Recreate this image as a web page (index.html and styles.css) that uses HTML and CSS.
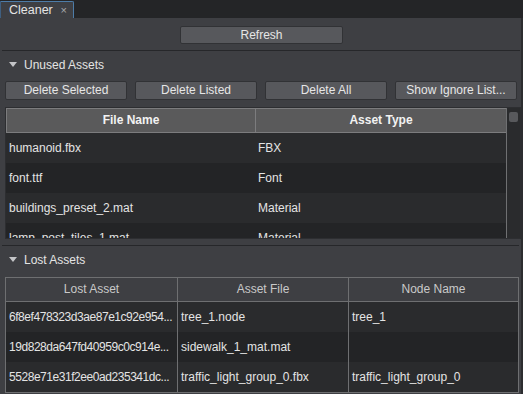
FILE: index.html
```html
<!DOCTYPE html>
<html lang="en">
<head>
    <meta charset="UTF-8">
    <title>Cleaner</title>
    <link rel="stylesheet" href="styles.css">
</head>
<body>

<div class="tabbar">
    <div class="tab">Cleaner<span class="tab-close">×</span></div>
</div>

<div class="panel">
    <div class="refresh-row">
        <button class="btn refresh">Refresh</button>
    </div>

    <!-- Unused assets -->
    <div class="section-head"><span class="arrow"></span>Unused Assets</div>
    <div class="actions">
        <button class="btn">Delete Selected</button>
        <button class="btn">Delete Listed</button>
        <button class="btn">Delete All</button>
        <button class="btn">Show Ignore List...</button>
    </div>
    <div class="unused-wrap">
        <div class="unused-table">
            <div class="u-head">File Name</div>
            <div class="u-head">Asset Type</div>
            <div class="u-cell">humanoid.fbx</div><div class="u-cell">FBX</div>
            <div class="u-cell alt">font.ttf</div><div class="u-cell alt">Font</div>
            <div class="u-cell">buildings_preset_2.mat</div><div class="u-cell">Material</div>
            <div class="u-cell alt">lamp_post_tiles_1.mat</div><div class="u-cell alt">Material</div>
        </div>
        <div class="scrollbar"><div class="thumb"></div></div>
    </div>

    <div class="divider"></div>

    <!-- Lost assets -->
    <div class="section-head"><span class="arrow"></span>Lost Assets</div>
    <div class="lost-table">
        <div class="l-head">Lost Asset</div>
        <div class="l-head">Asset File</div>
        <div class="l-head">Node Name</div>
        <div class="l-cell hash">6f8ef478323d3ae87e1c92e954...</div><div class="l-cell">tree_1.node</div><div class="l-cell">tree_1</div>
        <div class="l-cell alt hash">19d828da647fd40959c0c914e...</div><div class="l-cell alt">sidewalk_1_mat.mat</div><div class="l-cell alt"></div>
        <div class="l-cell hash">5528e71e31f2ee0ad235341dc...</div><div class="l-cell">traffic_light_group_0.fbx</div><div class="l-cell">traffic_light_group_0</div>
    </div>
</div>

</body>
</html>
```

FILE: styles.css
```css
body {
    margin: 0;
    width: 523px;
    height: 394px;
    overflow: hidden;
    background-color: #242527;
    font-family: 'Liberation Sans', Arial, sans-serif;
    font-size: 12px;
    color: #e4e4e4;
}
.tabbar {
    height: 18px;
    display: flex;
    align-items: flex-end;
}
.tab {
    width: 74px;
    height: 17px;
    box-sizing: border-box;
    padding-left: 8px;
    line-height: 16px;
    font-size: 12.5px;
    background-color: #3e3f43;
    border-top: 1px solid #4d7ca8;
    border-right: 1px solid #4d7ca8;
    border-left: 1px solid #3f5f80;
    border-radius: 0 2px 0 0;
    position: relative;
}
.tab-close {
    position: absolute;
    right: 6px;
    top: 0;
    font-size: 11px;
    color: #a8a9ad;
}
.panel {
    height: 376px;
    background-color: #3e3f43;
    border-right: 2px solid #2c2d30;
    box-sizing: border-box;
    display: flex;
    flex-direction: column;
}
.btn {
    font-family: inherit;
    font-size: 12px;
    color: #e6e6e6;
    background-color: #57585c;
    border: 1px solid #313235;
    border-radius: 2px;
    padding: 0;
    height: 19px;
    line-height: 17px;
}
.refresh-row {
    height: 33px;
    margin: 0 1px 0 2px;
    border-bottom: 1px solid #26272a;
    display: flex;
    justify-content: center;
    align-items: flex-start;
    padding-top: 8px;
    box-sizing: border-box;
}
.refresh {
    width: 163px;
    height: 18px;
    margin-left: 1px;
}
.section-head {
    height: 27px;
    line-height: 27px;
    display: flex;
    align-items: center;
    padding-left: 9px;
    padding-top: 1px;
    box-sizing: border-box;
}
.arrow {
    width: 0;
    height: 0;
    border-left: 4px solid transparent;
    border-right: 4px solid transparent;
    border-top: 5px solid #c4c5c8;
    margin-right: 7px;
    margin-top: -1px;
}
.actions {
    display: grid;
    grid-template-columns: repeat(4, 1fr);
    gap: 8px;
    margin: 3px 4px 0 5px;
}
.unused-wrap {
    margin: 7px 0 0 5px;
    height: 132px;
    width: 516px;
    box-sizing: border-box;
    border: 1px solid #2d2e31;
    background-color: #2a2b2d;
    display: flex;
    overflow: hidden;
}
.unused-table {
    width: 500px;
    display: grid;
    grid-template-columns: 249px 251px;
    grid-auto-rows: 30px;
    grid-template-rows: 25px;
    border-right: 1px solid #6f7072;
    align-content: start;
}
.u-head {
    background-color: #5a5a5b;
    border-top: 1px solid #7c7c7e;
    border-bottom: 1px solid #7c7c7e;
    border-left: 1px solid #7c7c7e;
    font-weight: bold;
    color: #f2f2f2;
    text-align: center;
    line-height: 23px;
}
.u-cell {
    background-color: #2a2b2d;
    line-height: 30px;
    padding-left: 3px;
    white-space: nowrap;
    overflow: hidden;
}
.u-cell.alt, .l-cell.alt {
    background-color: #232426;
}
.scrollbar {
    flex: 1;
    background-color: #2a2b2d;
    position: relative;
}
.thumb {
    position: absolute;
    left: 2px;
    top: 4px;
    width: 9px;
    height: 10px;
    background-color: #58595c;
    border-radius: 2px;
}
.divider {
    margin: 6px 2px 0 2px;
    border-top: 1px solid #26272a;
}
.lost-table {
    margin: 4px 0 0 5px;
    width: 514px;
    box-sizing: border-box;
    border: 1px solid #6e6f71;
    display: grid;
    grid-template-columns: 171px 171px 1fr;
    grid-template-rows: 24px repeat(3, 30px);
}
.l-head {
    border-bottom: 1px solid #6e6f71;
    color: #c9c9c9;
    text-align: center;
    line-height: 23px;
}
.l-head + .l-head, .l-cell:not(:nth-child(3n+1)) {
    border-left: 1px solid #6e6f71;
}
.l-cell {
    background-color: #2a2b2d;
    line-height: 30px;
    padding-left: 3px;
    white-space: nowrap;
    overflow: hidden;
}
.l-cell.hash {
    letter-spacing: -0.45px;
}
```
